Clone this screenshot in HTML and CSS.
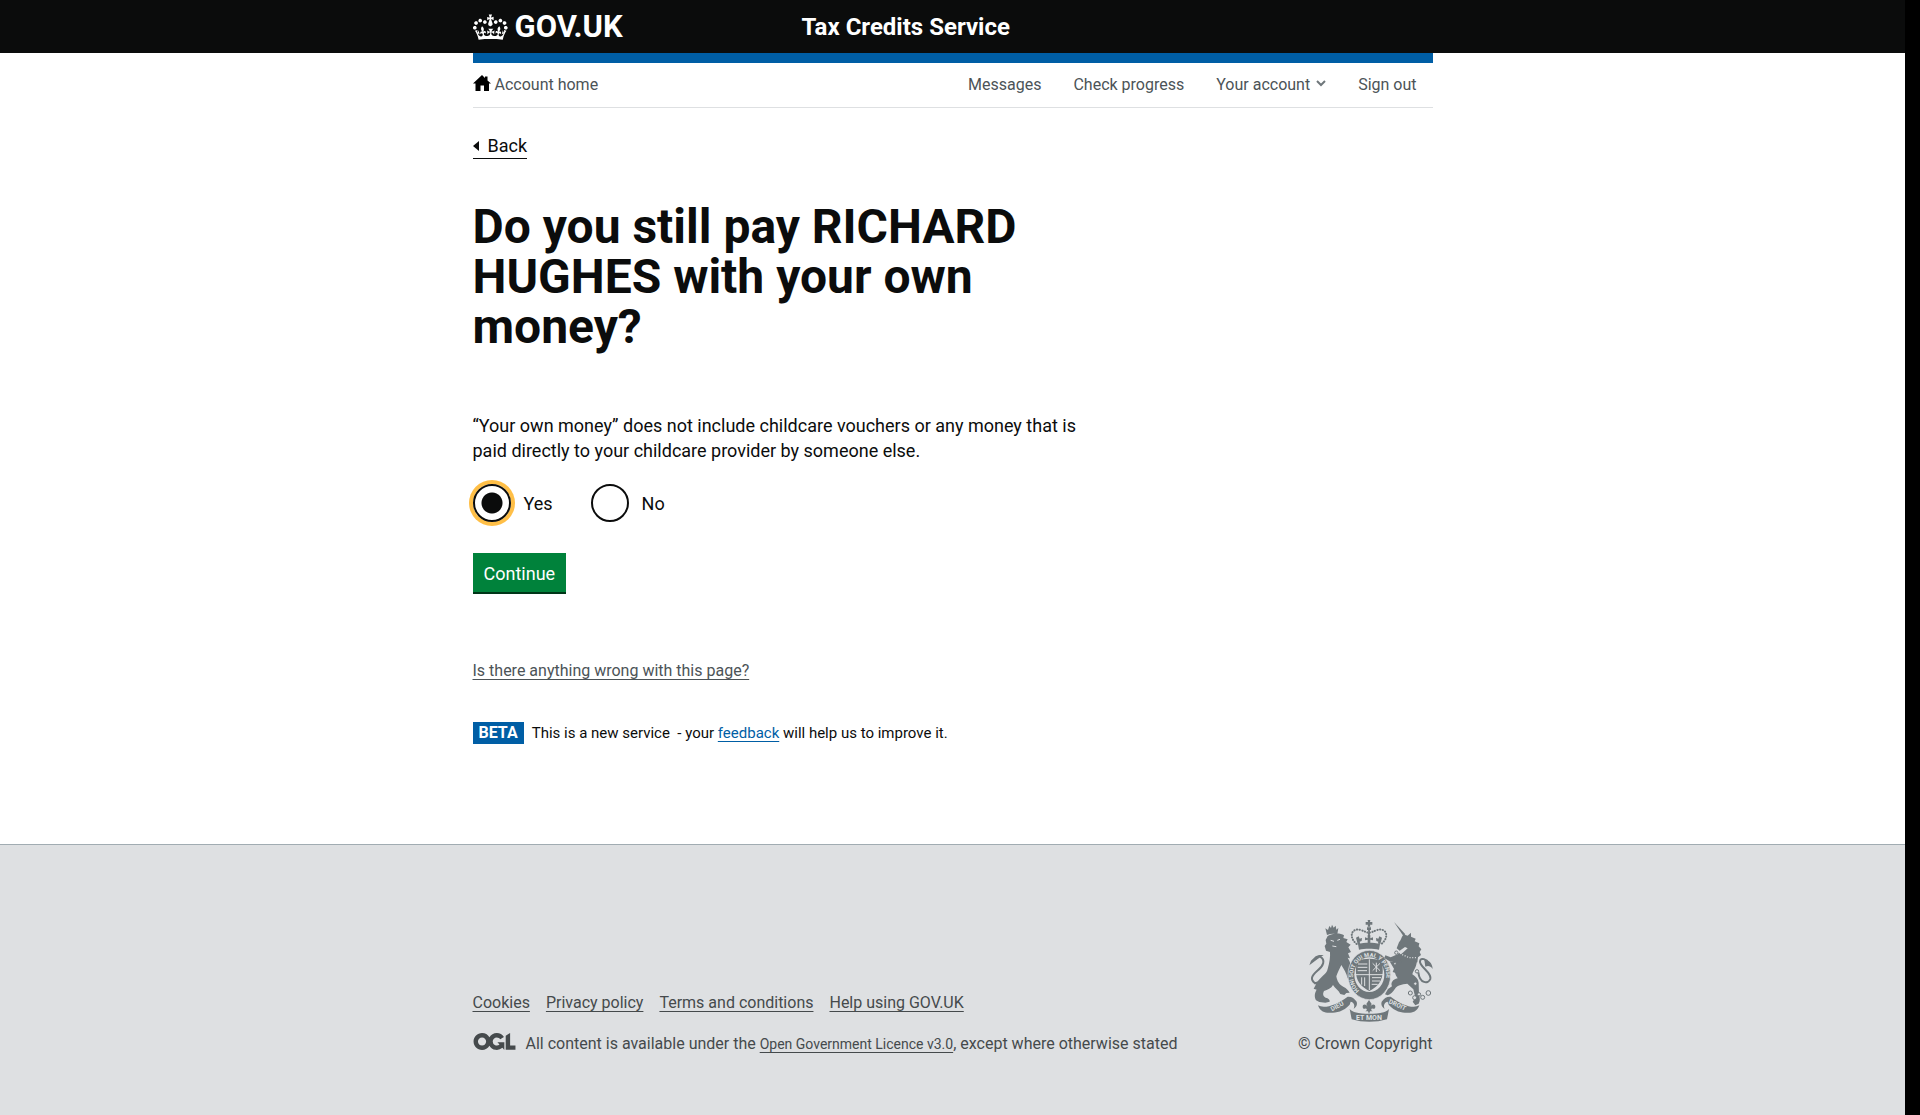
FILE: index.html
```html
<!DOCTYPE html>
<html lang="en">
<head>
<meta charset="utf-8">
<meta name="viewport" content="width=device-width, initial-scale=1">
<title>Do you still pay RICHARD HUGHES with your own money? - Tax Credits Service - GOV.UK</title>
<link rel="stylesheet" href="styles.css">
</head>
<body>
<div class="page">
  <header class="header">
    <div class="container header-inner">
      <a class="logo" href="#">
        <svg class="logo-crown" viewBox="0 4 36 26" aria-hidden="true"><path fill="currentColor" d="M6.7 12.2c1 .4 2.1-.1 2.5-1s-.1-2.1-1-2.5c-1-.4-2.1.1-2.5 1-.4 1 0 2.1 1 2.5m-4.3 2.5c1 .4 2.1-.1 2.5-1s-.1-2.1-1-2.5c-1-.4-2.1.1-2.5 1-.5 1 0 2.1 1 2.5m-1.3 4.8c1 .4 2.1-.1 2.5-1 .4-1-.1-2.1-1-2.5-1-.4-2.1.1-2.5 1-.4 1 0 2.1 1 2.5m10.4-5.8c1 .4 2.1-.1 2.5-1s-.1-2.1-1-2.5c-1-.4-2.1.1-2.5 1s0 2.1 1 2.5m17.4-1.5c-1 .4-2.1-.1-2.5-1s.1-2.1 1-2.5c1-.4 2.1.1 2.5 1 .5 1 0 2.1-1 2.5m4.3 2.5c-1 .4-2.1-.1-2.5-1s.1-2.1 1-2.5c1-.4 2.1.1 2.5 1 .5 1 0 2.1-1 2.5m1.3 4.8c-1 .4-2.1-.1-2.5-1-.4-1 .1-2.1 1-2.5 1-.4 2.1.1 2.5 1 .4 1 0 2.1-1 2.5m-10.4-5.8c-1 .4-2.1-.1-2.5-1s.1-2.1 1-2.5c1-.4 2.1.1 2.5 1s0 2.1-1 2.5m-5.3-4.9 2.4 1.3V6.5l-2.4.8c-.1-.1-.1-.2-.2-.2s1-3 1-3h-3.4l1 3c-.1.1-.2.1-.2.2-.1.1-2.4-.7-2.4-.7v3.5L17 8.8c-.1.1 0 .2.1.3l-1.4 4.2c-.1.2-.1.4-.1.6 0 1.1.8 2 1.9 2.2h.8c1-.2 1.9-1.1 1.9-2.1 0-.2-.1-.4-.1-.6l-1.4-4.2c.1-.1.1-.2.1-.4m-1 20.3c4.6 0 8.900.3 12.800.9 1.100-4.600 2.400-7.200 3.800-9.100l-2.600-.9c.3 1.300.3 1.900 0 2.800-.4-.4-.8-1.200-1.100-2.400l-1.200 4.200c.8-.5 1.400-.9 2-.9-1.200 2.600-2.700 3.200-3.600 3-1.200-.2-1.700-1.300-1.500-2.200.3-1.300 1.600-1.600 2.200-.1 1.200-2.400-.8-3.100-2.100-2.400 1.900-1.900 2.200-3.600.6-5.700-2.200 1.700-2.200 3.300-1.200 5.600-1.300-1.500-3.300-.7-2.500 1.700.9-1.400 2.100-.5 2 .8-.2 1.200-1.700 2.100-3.700 1.900-2.800-.2-2.900-2.200-2.900-3.600.7-.1 1.900.5 2.900 1.900l.4-4.300c-1.100 1.100-2.100 1.400-3.200 1.400.4-1.200 2.100-3 2.100-3h-5.400s1.700 1.900 2.100 3c-1.100 0-2.100-.2-3.200-1.400l.4 4.300c1-1.400 2.200-2 2.900-1.900-.1 1.500-.2 3.400-2.900 3.600-1.900.2-3.500-.7-3.700-1.900-.2-1.300 1-2.200 1.900-.8.7-2.400-1.200-3.200-2.600-1.700 1-2.300 1-3.900-1.200-5.600-1.600 2.100-1.300 3.800.6 5.700-1.300-.7-3.200 0-2.100 2.400.6-1.500 1.900-1.100 2.200.1.2.9-.4 1.900-1.500 2.200-.9.2-2.500-.4-3.600-3 .6 0 1.200.3 2 .9l-1.200-4.200c-.3 1.200-.7 1.900-1.100 2.400-.3-.8-.2-1.400 0-2.800l-2.600.9c1.400 1.900 2.700 4.500 3.800 9.100 4-.6 8.200-.9 12.800-.9"/></svg>
        <span>GOV.UK</span>
      </a>
      <a class="service-name" href="#">Tax Credits Service</a>
    </div>
  </header>

  <div class="container body">
    <nav class="account-nav" aria-label="Account">
      <a class="home-link" href="#">
        <svg class="home-icon" viewBox="0 0 18 16" aria-hidden="true"><path d="M9 0 12 3V1.500h2.500v4L18 8.500h-2V16h-5v-5.500H7.500V16H2.500V8.500H0z"/></svg>
        <span>Account home</span>
      </a>
      <ul class="nav-list">
        <li><a href="#">Messages</a></li>
        <li><a href="#">Check progress</a></li>
        <li><a class="nav-menu" href="#">Your account <svg class="chevron" viewBox="0 0 10 7" aria-hidden="true"><path d="M1 1l4 4 4-4"/></svg></a></li>
        <li><a href="#">Sign out</a></li>
      </ul>
    </nav>

    <a class="back-link" href="#">Back</a>

    <main class="content">
      <h1>Do you still pay RICHARD HUGHES with your own money?</h1>
      <p class="hint" id="hint">“Your own money” does not include childcare vouchers or any money that is paid directly to your childcare provider by someone else.</p>
      <form>
        <div class="radios" role="radiogroup" aria-describedby="hint">
          <div class="radio"><input class="focused" type="radio" id="pay-yes" name="pay" value="yes" checked><label for="pay-yes">Yes</label></div>
          <div class="radio"><input type="radio" id="pay-no" name="pay" value="no"><label for="pay-no">No</label></div>
        </div>
        <button class="button" type="button">Continue</button>
      </form>
      <a class="problem-link" href="#">Is there anything wrong with this page?</a>
      <div class="phase"><strong class="phase-tag">BETA</strong><span>This is a new service &nbsp;- your <a href="#">feedback</a> will help us to improve it.</span></div>
    </main>
  </div>

  <footer class="footer">
    <div class="container footer-inner">
      <div class="footer-meta">
        <ul class="footer-links">
          <li><a href="#">Cookies</a></li>
          <li><a href="#">Privacy policy</a></li>
          <li><a href="#">Terms and conditions</a></li>
          <li><a href="#">Help using GOV.UK</a></li>
        </ul>
        <div class="licence">
          <svg class="ogl" viewBox="0 0 483 196" role="img" aria-label="Open Government Licence"><path fill="currentColor" d="M421.5 142.8V.1l-50.7 32.3v161.1h112.4v-50.7zm-122.3-9.6A47.12 47.12 0 0 1 221 97.8c0-26 21.1-47.1 47.1-47.1 16.7 0 31.4 8.7 39.7 21.8l42.7-27.2A97.63 97.63 0 0 0 268.1 0c-36.5 0-68.3 20.1-85.1 49.7A98 98 0 0 0 97.8 0C43.900 0 0 43.900 0 97.800s43.900 97.800 97.800 97.800c36.500 0 68.300-20.100 85.100-49.700a97.760 97.760 0 0 0 149.600 25.400l19.400 22.200h3v-87.800h-80l24.300 27.500zM97.800 145c-26 0-47.100-21.100-47.100-47.100s21.100-47.100 47.100-47.100 47.100 21.100 47.100 47.100S123.800 145 97.800 145"/></svg>
          <p>All content is available under the <a href="#">Open Government Licence v3.0</a>, except where otherwise stated</p>
        </div>
      </div>
      <a class="copyright" href="#">
        <svg class="crest" viewBox="84 60 375 306" aria-hidden="true">
          <defs>
            <path id="garter" d="M238 272A50 57 0 1 1 304 268"/>
          </defs>
          <!-- royal crown -->
          <g class="solid">
            <path d="M263 60h8l-1 6h7v8h-7l1 6h-8l1-6h-7v-8h7zM261 82h12v8h-12zM234 132c20-5 46-5 66 0l-3 17c-18-4-42-4-60 0zM263 106l4-6 4 6v9l8-3v9l-8-2v13h-8v-13l-8 2v-9l8 3zM228 113l8-4 3 7 7-2-1 9-6 2 2 7h-8zM306 113l-8-4-3 7-7-2 1 9 6 2-2 7h8z"/>
          </g>
          <path class="beads" d="M230 132c-28-24-12-50 12-42 12 4 19 8 25 8 6 0 13-4 25-8 24-8 40 18 12 42M267 92v12"/>
          <!-- lion -->
          <g class="solid">
            <path d="M141 105l-5-20 8 5 4-12 5 6 3-10 5 9 6-6 2 12 6-5-3 19c-10-3-21-2-31 2z"/>
            <path d="M143 108c14-9 38-10 49-2l-2 8 13 4-4 8 13 8-7 8 8 14-9 4 6 15-7-2c8 14 12 24 10 40l11 9-3 12-10-7 4 14-12-6c-3-15-12-28-19-40-6 12-11 22-15 34 2 14 9 26 22 32 8 4 14 10 18 17l-10 1-6 6-12-3c-6-12-16-17-22-27-5 10-16 15-27 18-4 8-4 14 5 20 8 2 13 5 12 12l-13 3-18-2-10-5c-6-12-4-22 2-32l-9-3 9-17c9-17 30-26 33-42 6-21 8-36 7-51l-12-4-4-14 5-7-2-11z"/>
            <path d="M131 165l-18 12-25 19 5-14 14-13 10-4z"/>
          </g>
          <path class="line" d="M120 170c18 10 10 28-8 42-18 16-22 26-7 38l14-4"/>
          <path class="cut" d="M152 121l10 3M172 121l8-3M157 138l12 2"/>
          <!-- unicorn -->
          <g class="solid">
            <path d="M342 66l34 37-6 5z"/>
            <path d="M370 103l13 4 10-9v12l14 6-3 8 14 6-2 9 8 9-5 8 4 9-9 7-2 15c-13 3-23 3-33-4l-22-16 13-10 13-12-8-4-16 11-9-7 7-18c7-7 6-15 13-23z"/>
            <path d="M356 158c18 16 34 22 54 22 2 18-9 29-13 43 10 7 18 14 19 25l1 37c3 9 4 18-1 26l-10 5-8-11 8-12-6-25-18-17c-17 2-30 4-37 15-5 9-13 16-22 20l-8-3 9-16 12-8c-5-10 2-21 17-24-8-12-12-24-9-38l6-14z"/>
            <path d="M433 180c12 0 24 8 25 27-7-10-14-10-22-7z"/>
          </g>
          <path class="line" d="M415 217c4 34 30 36 36 20 6-19-34-38-31-53 2-14 20-5 27 5"/>
          <g class="rings"><circle cx="391" cy="279" r="6"/><circle cx="404" cy="293" r="6"/><circle cx="417" cy="283" r="5"/><circle cx="428" cy="292" r="6"/><circle cx="445" cy="279" r="7"/><circle cx="349" cy="158" r="5"/><circle cx="411" cy="214" r="5"/><circle cx="406" cy="251" r="5"/></g>
          <path class="beads-light" d="M354 154l15 11 18 8 22 0"/>
          <!-- garter and shield -->
          <ellipse class="solid outline" cx="268" cy="225" rx="64" ry="74"/>
          <ellipse class="gap" cx="268" cy="224" rx="45" ry="52"/>
          <path class="solid" d="M232 184c24-10 48-10 72 0 8 28 5 54-11 71-7 8-15 13-25 18-10-5-18-10-25-18-16-17-19-43-11-71z"/>
          <path class="cut" d="M268 178v92M224 224h88M234 192h28M233 202h29M233 212h28M278 190l22 22M300 190l-22 22M289 188v28M245 232v22M254 232v26M276 233h27M276 243h24M275 253h18"/>
          <text class="motto"><textPath href="#garter">HONI SOIT QUI MAL Y PENSE</textPath></text>
          <!-- unicorn forelegs -->
          <g class="solid">
            <path d="M362 176l-32 10 12 20-4 10 12 4 1-6-5-5 2-8-6-12 24-2z"/>
            <path d="M360 160l-28 12-16-6-3 8 18 11 32-4z"/>
          </g>
          <!-- ribbon -->
          <g class="solid">
            <path d="M114 316c18 11 55 0 89-26 12-1 20 5 27 15 3 10-2 17-9 21 5-11 0-19-9-21l-3 9c-22 25-50 25-65 24-14 1-26-8-30-22z"/>
            <path d="M418 316c-18 11-52 0-86-26-12-1-20 5-27 15-3 10 2 17 9 21-5-11 0-19 9-21l3 9c22 25 48 25 62 24 14 1 26-8 30-22z"/>
            <path d="M209 327c5 5 10 8 16 10 28 6 58 6 86 0 6-2 11-5 16-10l-6 31c-33 10-73 10-106 0z"/>
            <path d="M267 300l8 12-4 8c5-9 15-8 15 0 0 7-6 8-10 5l-3 5 5 4h-8l-3 8-3-8h-8l5-4-3-5c-4 3-10 2-10-5 0-8 10-9 15 0l-4-8z"/>
          </g>
          <text class="scroll" x="267" y="361" text-anchor="middle">ET MON</text>
          <text class="scroll small" transform="translate(156 334) rotate(-28)">DIEU</text>
          <text class="scroll small" transform="translate(325 309) rotate(25)">DROIT</text>
        </svg>
        <span>© Crown Copyright</span>
      </a>
    </div>
  </footer>
</div>
</body>
</html>
```
FILE: styles.css
```css
* { box-sizing: border-box; }

html { background: #000; }

body {
  margin: 0;
  font-family: Roboto, "Liberation Sans", sans-serif;
  font-size: 16px;
  line-height: 20px;
  color: #0b0c0c;
}

.page {
  display: flex;
  flex-direction: column;
  min-height: 100vh;
  margin-right: 15px;
  background: #fff;
}

.container {
  width: 100%;
  max-width: 960px;
  margin: 0 auto;
}

ul { margin: 0; padding: 0; list-style: none; }

/* Header */
.header { background: #0b0c0c; }

.header-inner {
  display: grid;
  grid-template-columns: 329px 1fr;
  align-items: center;
  height: 53px;
}

.header a { color: #fff; text-decoration: none; font-weight: 700; }

.logo { display: flex; align-items: center; gap: 7px; font-size: 31px; line-height: 32px; }
.logo-crown { width: 35px; height: 26px; }
.service-name { font-size: 24px; line-height: 30px; }

/* Account navigation */
.account-nav {
  display: flex;
  justify-content: space-between;
  align-items: center;
  height: 55px;
  padding-right: 16px;
  border-top: 10px solid #005ea5;
  border-bottom: 1px solid #dee0e2;
}

.account-nav a { color: #4c5357; text-decoration: none; }
.home-link { display: flex; align-items: center; gap: 4px; }
.home-icon { width: 18px; height: 16px; margin-bottom: 4px; fill: #000; }
.nav-list { display: flex; gap: 32px; }
.nav-menu { display: flex; align-items: center; gap: 6px; }
.chevron { width: 10px; height: 7px; margin-bottom: 4px; fill: none; stroke: #6f777b; stroke-width: 2; }

/* Back link */
.back-link {
  display: flex;
  align-items: center;
  gap: 9px;
  width: fit-content;
  margin-top: 26px;
  border-bottom: 1px solid #0b0c0c;
  color: #0b0c0c;
  font-size: 18px;
  line-height: 24px;
  text-decoration: none;
}

.back-link::before {
  content: "";
  border: 5px solid transparent;
  border-left-width: 0;
  border-right: 6px solid #0b0c0c;
}

/* Question */
.content { padding-bottom: 100px; }

h1 {
  max-width: 620px;
  margin: 43px 0 0;
  font-size: 48px;
  line-height: 50px;
  font-weight: 700;
}

.hint {
  max-width: 620px;
  margin: 61px 0 0;
  font-size: 18px;
  line-height: 25px;
}

.radios { display: flex; gap: 38px; margin-top: 21px; }
.radio { display: flex; align-items: center; gap: 13px; font-size: 18px; line-height: 25px; }

.radio input {
  appearance: none;
  width: 38px;
  height: 38px;
  margin: 0;
  border: 2px solid #0b0c0c;
  border-radius: 50%;
  background: #fff;
}

.radio input:checked { background: radial-gradient(circle, #0b0c0c 10px, #fff 11px); }
.radio input.focused { box-shadow: 0 0 0 4px #ffbf47; }

.button {
  display: block;
  margin: 31px 0 0;
  padding: 9px 11px 6px;
  border: 0;
  background: #00823b;
  box-shadow: 0 2px 0 #003618;
  color: #fff;
  font-family: inherit;
  font-size: 18px;
  line-height: 24px;
}

.problem-link { display: block; width: fit-content; margin-top: 69px; color: #4c5357; }
.problem-link, .footer a, .phase a { text-underline-offset: 3px; text-decoration-skip-ink: none; }

.phase { display: flex; align-items: center; gap: 8px; margin-top: 41px; font-size: 15px; }
.phase-tag { padding: 1px 6px; background: #005ea5; color: #fff; font-size: 16px; }
.phase a { color: #005ea5; }

/* Footer */
.footer {
  flex-grow: 1;
  border-top: 1px solid #a1acb2;
  background: #dee0e2;
  color: #454a4c;
}

.footer a { color: inherit; }

.footer-inner {
  display: flex;
  justify-content: space-between;
  align-items: flex-end;
  padding: 75px 0 60px;
}

.footer-links { display: flex; gap: 16px; }
.licence { display: flex; align-items: center; gap: 10px; margin-top: 20px; }
.licence p { margin: 0; }
.licence a { font-size: 14px; }
.ogl { width: 43px; height: 17px; margin-bottom: 4px; }

.copyright { display: flex; flex-direction: column; align-items: flex-end; gap: 12px; }
.footer .copyright { text-decoration: none; }

/* Royal arms */
.crest { width: 125px; height: 102px; }
.crest .solid { fill: #6f777b; }
.crest .outline { stroke: #dee0e2; stroke-width: 2; }
.crest .gap { fill: #dee0e2; }
.crest .cut { fill: none; stroke: #dee0e2; stroke-width: 3; }
.crest .line { fill: none; stroke: #6f777b; stroke-width: 6; }
.crest .rings { fill: #dee0e2; stroke: #6f777b; stroke-width: 3; }
.crest .beads { fill: none; stroke: #6f777b; stroke-width: 6; stroke-linecap: round; stroke-dasharray: 1 7; }
.crest .beads-light { fill: none; stroke: #dee0e2; stroke-width: 4; stroke-dasharray: 3 5; }
.crest .motto { fill: #dee0e2; font-size: 17px; font-weight: 700; }
.crest .scroll { fill: #dee0e2; font-size: 21px; font-weight: 700; }
.crest .small { font-size: 19px; }
```
